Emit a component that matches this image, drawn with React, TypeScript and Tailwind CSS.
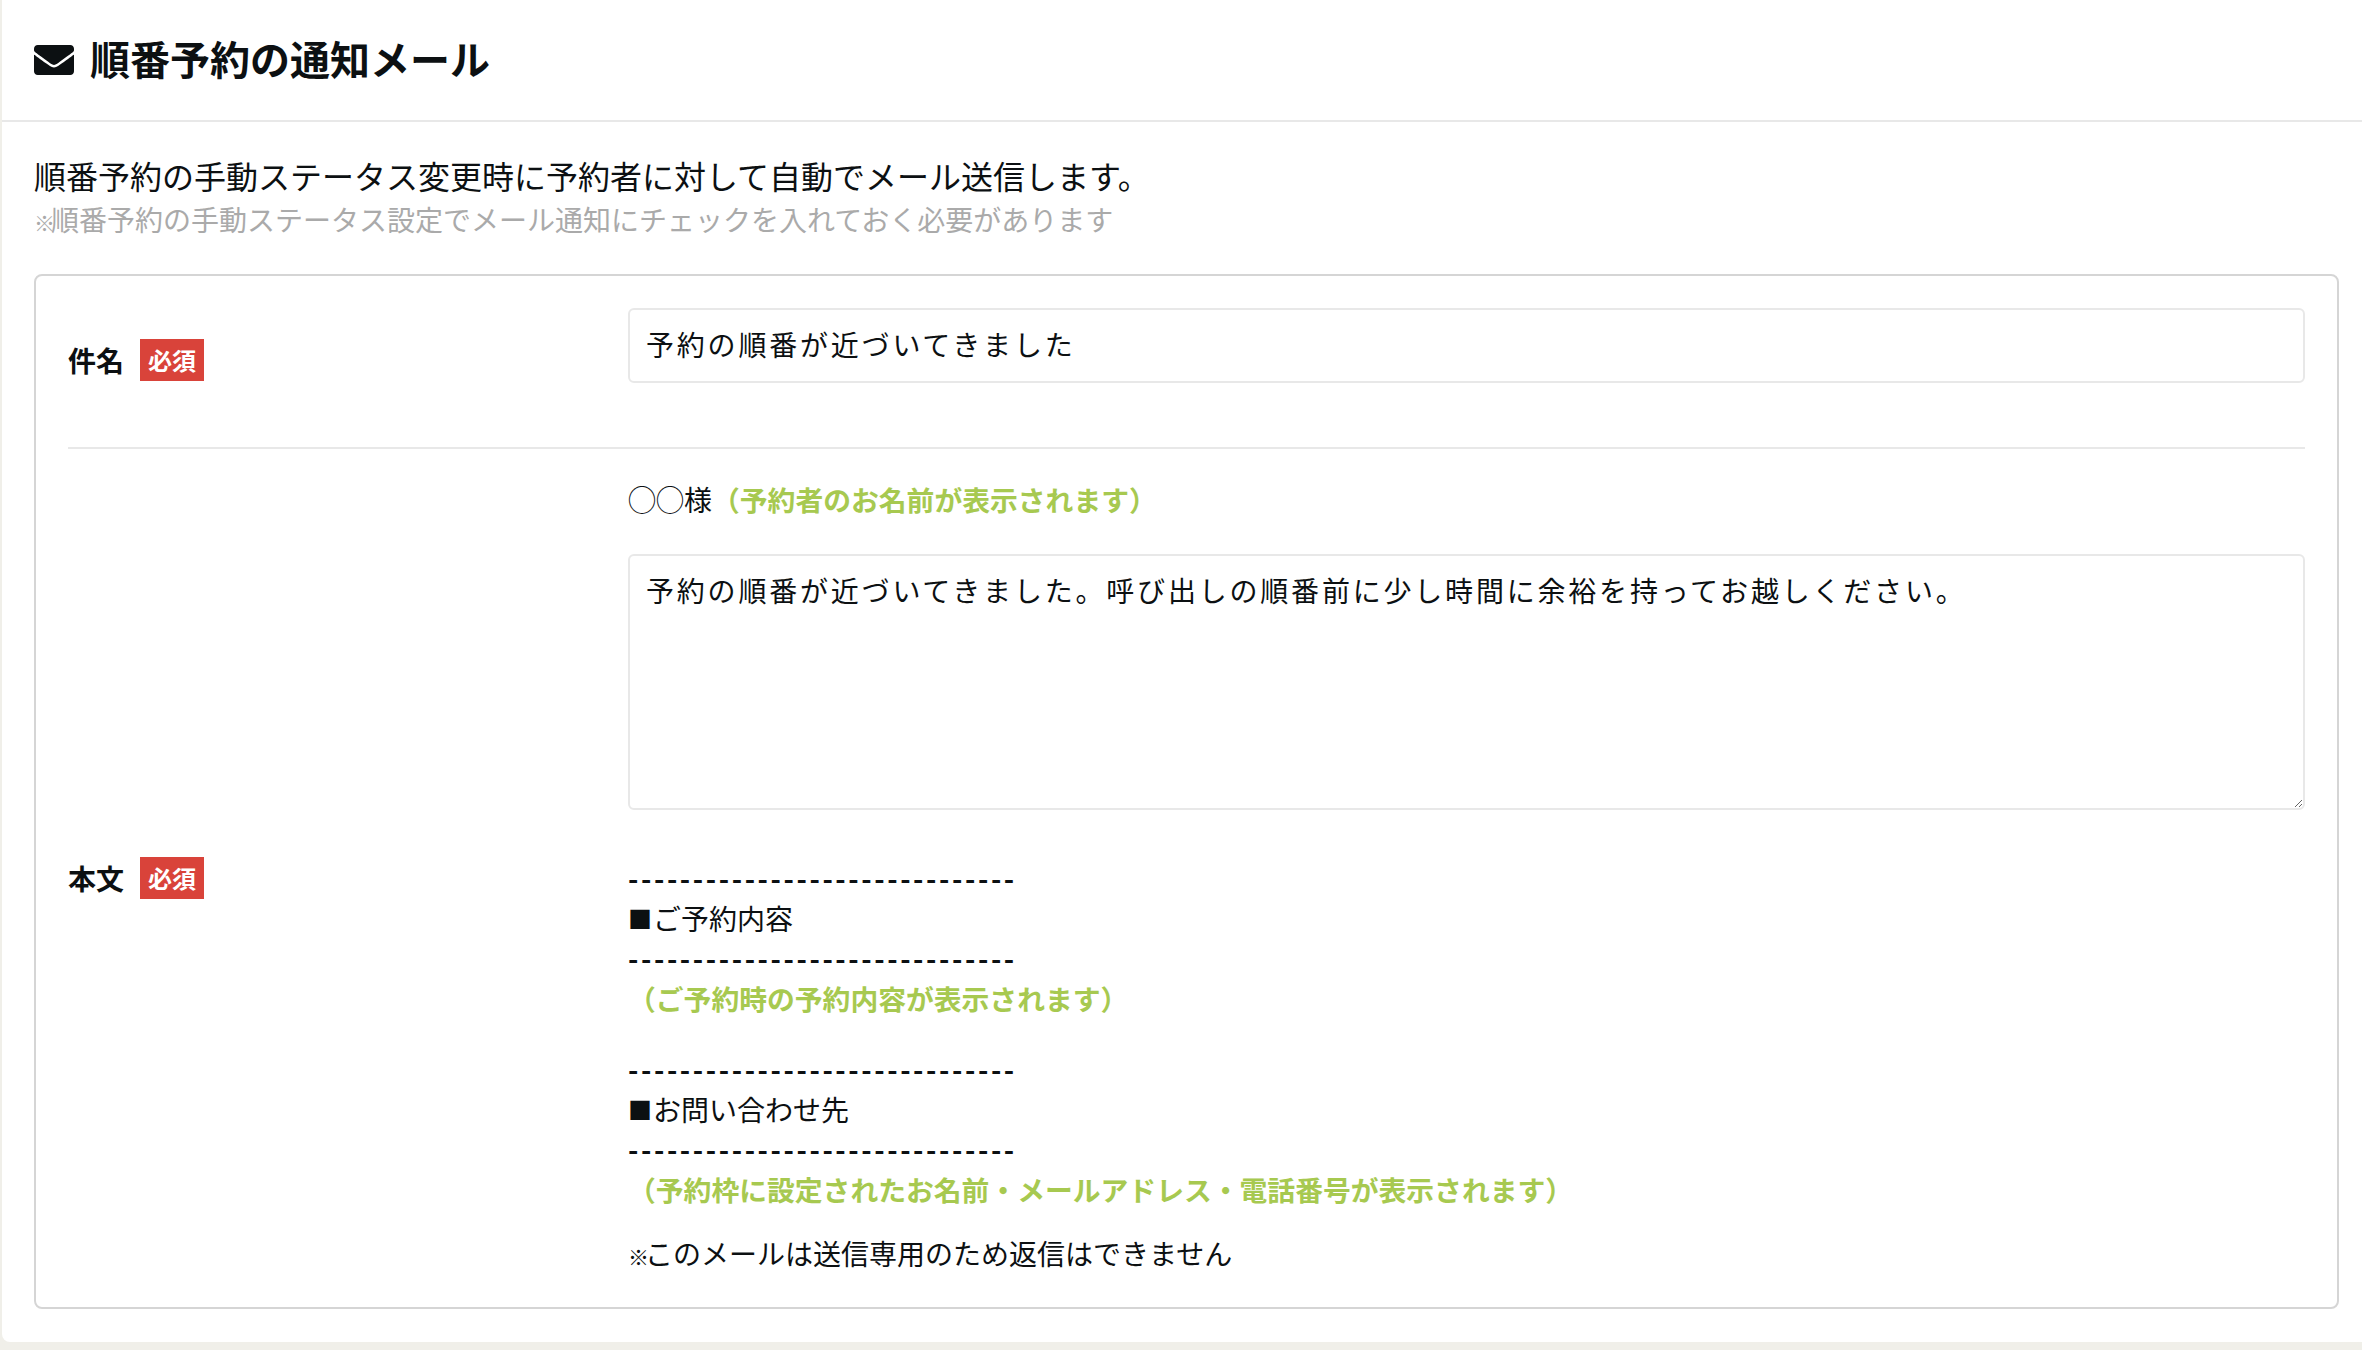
import { FaEnvelope } from 'react-icons/fa'

const font = '[font-family:"Noto_Sans_CJK_JP","Noto_Sans",sans-serif]'

function Required() {
  return (
    <span className="flex h-[42px] w-[64px] items-center justify-center bg-[#d9433a] text-[24px] font-bold text-white">
      必須
    </span>
  )
}

function Label({ text, className = '' }: { text: string; className?: string }) {
  return (
    <div className={`flex w-[560px] shrink-0 items-center gap-4 ${className}`}>
      <span className="text-[28px] font-bold">{text}</span>
      <Required />
    </div>
  )
}

function Note({ text }: { text: string }) {
  return <div className="h-10 text-[27.8px] leading-10 font-bold text-[#a7c950]">{text}</div>
}

function Heading({ text }: { text: string }) {
  return (
    <div className="h-10 text-[28px] leading-10">
      <span className="mr-[1px] align-[2px] text-[24px]">■</span>
      {text}
    </div>
  )
}

function Dashes() {
  return <div className="h-10 text-[28px] leading-10 font-bold tracking-[2.6px]">------------------------------</div>
}

export default function App() {
  return (
    <div className={`h-[1350px] overflow-hidden bg-[#f0efe9] pl-[2px] text-[#0c1012] ${font}`}>
      <div className="h-[1342px] rounded-bl-lg bg-white">
        {/* Header */}
        <div className="flex h-[122px] items-center gap-4 border-b-2 border-[#e8e8e8] pl-[32px]">
          <FaEnvelope className="h-[40px] w-[40px]" />
          <h1 className="pb-[5px] text-[40px] font-bold">順番予約の通知メール</h1>
        </div>

        <div className="px-[32px] pr-[23px]">
          <p className="mt-[32px] text-[32px] leading-[43px]">
            順番予約の手動ステータス変更時に予約者に対して自動でメール送信します。
          </p>
          <p className="text-[28px] leading-[44px] text-[#aaaaaa]">
            <span className="-mr-[4px] text-[21px] font-bold">※</span>順番予約の手動ステータス設定でメール通知にチェックを入れておく必要があります
          </p>

          {/* Form */}
          <div className="mt-[30px] h-[1035px] rounded-lg border-2 border-[#d5d5d5] px-[32px]">
            <div className="flex h-[173px] items-center border-b-2 border-[#e8e8e8]">
              <Label text="件名" className="mb-[3px]" />
              <div className="mb-[32px] flex h-[75px] flex-1 items-center rounded-md border-2 border-[#e8e8e8] px-4 pb-[3px] text-[28px] tracking-[2.8px]">
                予約の順番が近づいてきました
              </div>
            </div>
            <div className="flex h-[858px] items-center">
              <Label text="本文" />
              <div className="flex-1 pb-[4px]">
                <div className="h-10 text-[28px] leading-10">
                  ◯◯様<span className="text-[27.8px] font-bold text-[#a7c950]">（予約者のお名前が表示されます）</span>
                </div>
                <textarea
                  readOnly
                  className="mt-[35px] block h-[256px] w-full rounded-md border-2 border-[#e8e8e8] px-4 py-[13px] text-[28px] tracking-[2.8px]"
                  value="予約の順番が近づいてきました。呼び出しの順番前に少し時間に余裕を持ってお越しください。"
                />
                <div className="mt-[48px]">
                  <Dashes />
                  <Heading text="ご予約内容" />
                  <Dashes />
                  <Note text="（ご予約時の予約内容が表示されます）" />
                  <div className="h-[31px]" />
                  <Dashes />
                  <Heading text="お問い合わせ先" />
                  <Dashes />
                  <Note text="（予約枠に設定されたお名前・メールアドレス・電話番号が表示されます）" />
                  <div className="mt-[24px] h-10 text-[28px] leading-10">
                    <span className="-mr-[4px] text-[21px] font-bold">※</span>このメールは送信専用のため返信はできません
                  </div>
                </div>
              </div>
            </div>
          </div>
        </div>
      </div>
    </div>
  )
}
